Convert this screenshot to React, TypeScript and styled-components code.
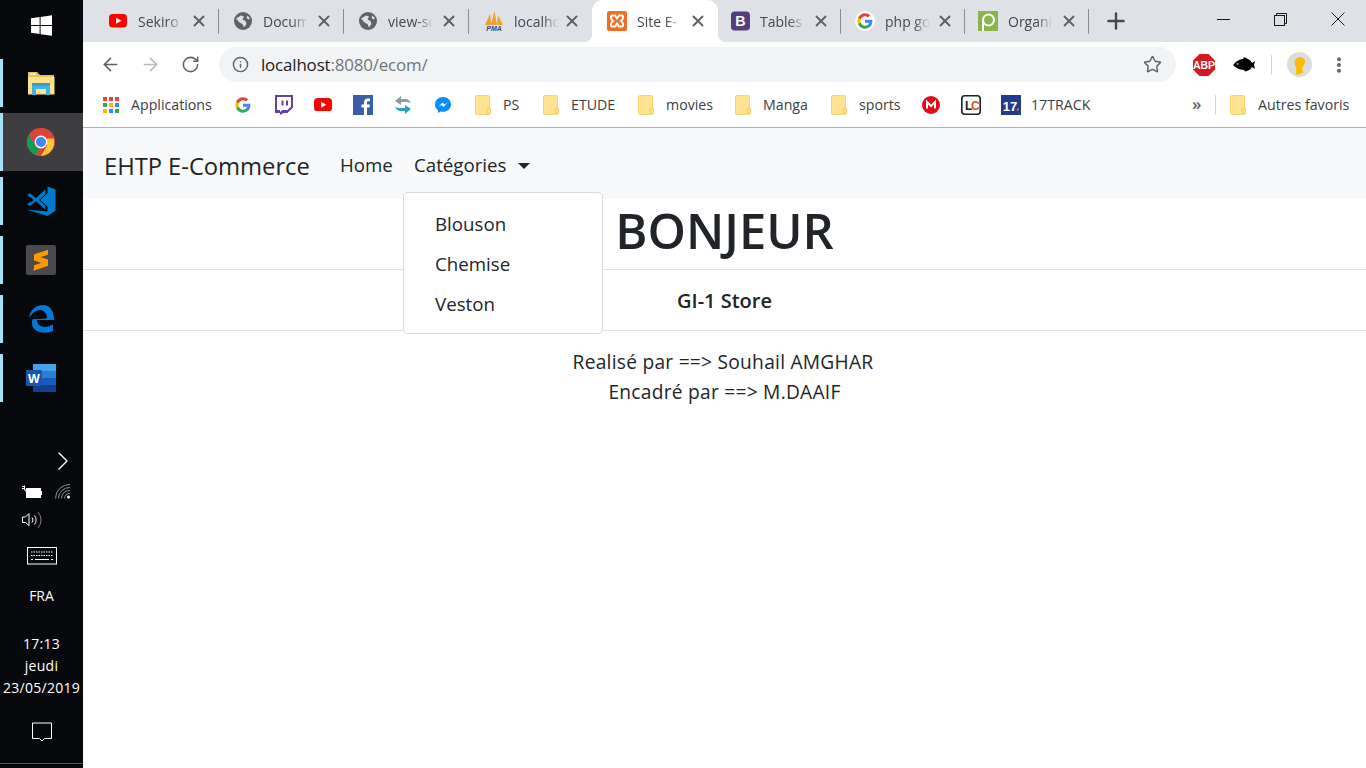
import React from "react";
import styled, { createGlobalStyle } from "styled-components";
import { ArrowLeft, ArrowRight, RotateCw, Info, Star, X, Plus, ChevronRight, MoreVertical } from "lucide-react";

const Global = createGlobalStyle`
  html, body { margin: 0; padding: 0; background: #fff; }
  body { font-family: "Open Sans", "Noto Sans", sans-serif; color: #212529; }
  * { box-sizing: border-box; }
`;
const Screen = styled.div`display: flex; width: 1366px; height: 768px; overflow: hidden; background: #fff;`;
const Taskbar = styled.aside`
  width: 83px; flex: none; background: #07080c; color: #fff; display: flex; flex-direction: column;
  position: relative;
`;
const StartButton = styled.div`height: 53px; display: flex; align-items: center; justify-content: center; padding: 0 1px 3px 0;`;
const Pinned = styled.div`display: flex; flex-direction: column;`;
const TaskItem = styled.div<{ $active?: boolean }>`
  position: relative; height: 59px; display: flex; align-items: center; justify-content: center; padding-right: 1px;
  border-top: 1px solid transparent; background-clip: padding-box;
  background-color: ${p => (p.$active ? "#3e3e41" : "transparent")};
  &::before {
    content: ""; position: absolute; left: 0; width: 3px; background: #a6dff8;
    top: ${p => (p.$active ? "0" : "5px")}; bottom: ${p => (p.$active ? "0" : "5px")};
  }
`;
const Tray = styled.div`margin-top: auto; display: flex; flex-direction: column; align-items: center; border-bottom: 1px solid #55565a; height: 318px; margin-bottom: 4px;`;
const TrayRow = styled.div<{ $h: number; $l?: number; $r?: number; $t?: number; $gap?: number }>`
  height: ${p => p.$h}px; width: 100%; display: flex; align-items: center; justify-content: center; gap: ${p => p.$gap ?? 0}px;
  padding: ${p => p.$t ?? 0}px ${p => p.$r ?? 0}px 0 ${p => p.$l ?? 0}px;
`;
const Clock = styled.div`display: flex; flex-direction: column; align-items: center; font-size: 14px; line-height: 22px; letter-spacing: .25px; padding-top: 19px; color: #fff; white-space: nowrap;`;
const Lang = styled.div`font-size: 14px; line-height: 20px; letter-spacing: 0;`;

const Browser = styled.main`flex: 1; min-width: 0; display: flex; flex-direction: column; position: relative;`;
const TabStrip = styled.div`height: 42px; flex: none; background: #dee1e6; display: flex; padding-left: 11px; align-items: stretch;`;
const Tab = styled.div<{ $active?: boolean; $sep?: boolean; $w: number; $pad: number }>`
  width: ${p => p.$w}px; flex: none; position: relative; display: flex; align-items: center; padding-left: ${p => p.$pad}px; gap: 10px;
  background: ${p => (p.$active ? "#fff" : "transparent")};
  border-radius: ${p => (p.$active ? "11px 11px 0 0" : "0")};
  color: #45484d;
  &::after {
    content: ""; display: ${p => (p.$sep ? "block" : "none")}; position: absolute; right: 0; top: 9px; width: 1px; height: 25px; background: #8b8e93;
  }
`;
const Flare = styled.span<{ $side: "left" | "right" }>`
  position: absolute; bottom: 0; width: 7px; height: 7px;
  ${p => (p.$side === "left" ? "left: -7px;" : "right: -7px;")}
  background: radial-gradient(circle at ${p => (p.$side === "left" ? "0 0" : "100% 0")}, transparent 6.6px, #fff 7px);
`;
const TabIconBox = styled.span<{ $w: number }>`width: ${p => p.$w}px; height: 20px; flex: none; display: flex; align-items: center; justify-content: flex-start;`;
const TabTitle = styled.span`
  width: 50px; flex: none; white-space: nowrap; font-size: 14px; letter-spacing: 0;
  -webkit-mask-image: linear-gradient(90deg, #000 58%, transparent 90%);
  mask-image: linear-gradient(90deg, #000 58%, transparent 90%);
`;
const TabClose = styled.span`position: absolute; right: 11px; top: 12px; display: flex; color: #5f6368;`;
const NewTab = styled.div`width: 54px; display: flex; align-items: center; justify-content: center; color: #45484d;`;
const WinControls = styled.div`margin-left: auto; display: flex; height: 38px; align-items: center; color: #1a1a1a;`;
const WinBtn = styled.div`width: 57px; display: flex; align-items: center; justify-content: center;`;

const Toolbar = styled.div`height: 43px; flex: none; background: #fff; display: flex; align-items: center; padding: 2px 0 0 16px;`;
const NavBtn = styled.div<{ $dim?: boolean; $l?: number }>`width: 40px; height: 24px; flex: none; display: flex; align-items: center; padding-left: ${p => p.$l ?? 1}px; color: ${p => (p.$dim ? "#b8babd" : "#5f6368")};`;
const Omnibox = styled.div`
  width: 957px; height: 35px; flex: none; background: #f1f3f4; border-radius: 18px; display: flex; align-items: center;
  padding: 0 14px 0 13px; color: #5f6368;
`;
const Url = styled.div`font-size: 16.9px; margin-left: 12px; color: #202124; letter-spacing: -0.15px; flex: 1;`;
const UrlRest = styled.span`color: #70757a;`;
const ExtArea = styled.div`display: flex; align-items: center; padding-left: 17px; gap: 0;`;
const ExtSlot = styled.div<{ $w: number; $l?: number }>`width: ${p => p.$w}px; padding-left: ${p => p.$l ?? 0}px; display: flex; align-items: center; flex: none;`;
const VSep = styled.div`width: 1px; height: 20px; background: #d5d6d8; flex: none;`;

const Bookmarks = styled.div`height: 43px; flex: none; background: #fff; border-bottom: 1px solid #b2b3b4; display: flex; align-items: center; padding: 0 0 3px 20px; position: relative;`;
const Bm = styled.div<{ $w: number; $gap?: number; $l?: number }>`width: ${p => p.$w}px; margin-left: ${p => p.$l ?? 0}px; flex: none; display: flex; align-items: center; gap: ${p => p.$gap ?? 12}px; white-space: nowrap; font-size: 14.2px; letter-spacing: 0; color: #3c4043;`;
const Overflow = styled.div`margin-left: 71px; width: 23px; font-size: 17px; font-weight: 600; color: #5f6368; padding-bottom: 3px;`;

const Navbar = styled.nav`height: 71px; flex: none; background: #f8f9fa; display: flex; align-items: center; padding: 4px 0 0 21px; position: relative;`;
const Brand = styled.div`font-size: 23.8px; color: #212529; width: 236px; letter-spacing: -0.05px; padding-top: 1px;`;
const NavLink = styled.div<{ $w?: number }>`font-size: 18.7px; width: ${p => (p.$w ? `${p.$w}px` : "auto")}; color: #212529; padding-bottom: 3px;`;
const Caret = styled.span`display: inline-block; width: 0; height: 0; margin-left: 12px; vertical-align: 3px; border-top: 6.5px solid #212529; border-left: 6.5px solid transparent; border-right: 6.5px solid transparent;`;
const Dropdown = styled.div`
  position: absolute; left: 320px; top: 64px; width: 200px; height: 142px; padding: 11px 0; background: #fff; z-index: 3;
  border: 1px solid rgba(0,0,0,.15); border-radius: 5px;
`;
const DropItem = styled.div`height: 40px; padding-left: 31px; font-size: 18.7px; line-height: 39px; color: #212529;`;

const Content = styled.section`text-align: center; position: relative;`;
const Heading = styled.h1`margin: 0; height: 71px; font-size: 48.9px; line-height: 62px; font-weight: 600; color: #212529; border-bottom: 1px solid #dee2e6;`;
const Sub = styled.h5`margin: 0; height: 61px; font-size: 20px; line-height: 61px; font-weight: 600; color: #212529; border-bottom: 1px solid #dee2e6;`;
const Credits = styled.div`padding-top: 16px; font-size: 19.2px; letter-spacing: .25px; line-height: 30px; color: #212529;`;
const CreditLine = styled.div<{ $r?: number }>`padding-right: ${p => p.$r ?? 0}px;`;

const Win = () => (
  <svg width="21" height="21" viewBox="0 0 21 21"><path fill="#fff" d="M0 3.200 8.600 2v7.900H0zM9.600 1.900 21 .2v9.700H9.600zM0 11h8.600v8L0 17.800zM9.600 11H21v9.800L9.600 19.200z" /></svg>
);
const Explorer = () => (
  <svg width="28" height="24" viewBox="0 0 28 24">
    <path fill="#e9c25a" d="M1 1h9l3 3h14v3H1z" /><path fill="#ffe28c" d="M1 6h26.500v17.500H1z" />
    <path fill="#fff" d="M3 2.500h6v1.500H3z" opacity=".8" /><path fill="#41b6e6" d="M5 14h18v10h-4v-6h-10v6H5z" /><path fill="#2a8fc4" d="M5 12h18v2.500H5z" opacity=".9" />
  </svg>
);
const Chrome = ({ s = 28 }: { s?: number }) => (
  <svg width={s} height={s} viewBox="0 0 48 48">
    <circle cx="24" cy="24" r="24" fill="#db4437" />
    <path fill="#0f9d58" d="M24 48A24 24 0 0 1 3.200 12L13.600 30l8 4-6 13z" />
    <path fill="#fcc934" d="M24 48l10.400-18 0-12H45.800A24 24 0 0 1 24 48z" />
    <path fill="#db4437" d="M3.200 12A24 24 0 0 1 45.800 14H24a10 10 0 0 0-10 10z" />
    <circle cx="24" cy="24" r="11" fill="#fff" /><circle cx="24" cy="24" r="8.700" fill="#4285f4" />
  </svg>
);
const VSCode = () => (
  <svg width="30" height="30" viewBox="0 0 30 30">
    <path fill="#007acc" d="M21.500.6 29.500 3.400v21.400L21.500 30 0 23.600l21.500 1.800zM21.500 7v13.800l-7.300-6.900z" />
    <path fill="#007acc" d="M1.200 8.800 4 7.200l6 5 9.500-9-.1 4.700-6.200 6 6.200 5.800v4l-9.400-8.800-6 5-2.800-1.500 5-5z" />
    <path fill="#07080c" d="M4.500 11l3 3-3 2.900z" />
  </svg>
);
const Sublime = () => (
  <svg width="30" height="30" viewBox="0 0 30 30">
    <rect width="30" height="30" rx="2" fill="#4a4a4b" />
    <path fill="#ff9800" d="M22 5 8 9.600v6L20 19.400 7 24.400v1.200l15-5v-6L10.400 10.800 22 7z" /><path fill="#ff9800" d="M8 9.600 22 5v4.700L8 14.300zM8 20.300 22 15.700v5l-14 4.700z" />
  </svg>
);
const Edge = () => (
  <svg width="26" height="28" viewBox="0 0 26 28">
    <path fill="#0078d7" d="M1 13C2 5 8 0 15 0c7 0 11 6 11 15H9c0 7 9 9 16 4.500v6.500C16 30 3 27 4 17 4 14 7 10 11 9c-3 1-5 2-6 5 2 0 14 0 14-1 0-4-3-8-7-8-5 0-8 4-11 8z" />
  </svg>
);
const Word = () => (
  <svg width="30" height="28" viewBox="0 0 30 28">
    <rect x="7" y="0" width="23" height="7" fill="#41a5ee" /><rect x="7" y="7" width="23" height="7" fill="#2b7cd3" /><rect x="7" y="14" width="23" height="7" fill="#185abd" /><rect x="7" y="21" width="23" height="7" fill="#103f91" />
    <rect x="0" y="6" width="16" height="16" rx="1" fill="#1a56b0" />
    <text x="8" y="19" textAnchor="middle" fontFamily="Liberation Sans" fontWeight="700" fontSize="12.500" fill="#fff">W</text>
  </svg>
);
const Battery = () => (
  <svg width="20" height="13" viewBox="0 0 20 13" fill="none" stroke="#fff"><path d="M0 1.500h2.500M0 3.500h2.500M2.500 .5v4.500h1.500V7" strokeWidth="1" /><rect x="4.500" y="3.500" width="14" height="9" fill="#fff" strokeWidth="1" /><path d="M19.500 6v4" strokeWidth="1" /></svg>
);
const Wifi = () => (
  <svg width="16" height="15" viewBox="0 0 16 15" fill="none" stroke="#8d8d90"><path d="M.500 14.500A14 14 0 0 1 15 .5M3.500 14.500A11 11 0 0 1 15 3.500M6.500 14.500A8 8 0 0 1 15 6.500M9.500 14.500A5 5 0 0 1 15 9.500" /><circle cx="13.500" cy="13" r="1.500" fill="#fff" stroke="none" /></svg>
);
const Speaker = () => (
  <svg width="21" height="18" viewBox="0 0 21 18" fill="none" stroke="#fff"><path d="M.500 6h3l3.500-3.500v12L3.500 11.500h-3z" /><path d="M10 6.500a4 4 0 0 1 0 5M12.500 4.500a7 7 0 0 1 0 9" /><path stroke="#808084" d="M16 1a12 12 0 0 1 0 16" /></svg>
);
const Keyboard = () => (
  <svg width="30" height="18" viewBox="0 0 30 18" fill="none" stroke="#fff"><rect x=".500" y=".500" width="29" height="16.500" />
    <path strokeDasharray="1.500 1" d="M4 5h22M4 8.500h22" /><path d="M4 12.500h2M8 12.500h14M24 12.500h2" /></svg>
);
const Notif = () => (
  <svg width="20" height="20" viewBox="0 0 20 20" fill="none" stroke="#fff"><path d="M.500 1h19v15.500h-7L10 19l-2.500-2.500h-7z" /></svg>
);

const YouTube = ({ w = 18 }: { w?: number }) => (
  <svg width={w} height={w * 0.75} viewBox="0 0 24 18"><rect width="24" height="18" rx="5" fill="#f00" /><path d="M9.500 5v8l7-4z" fill="#fff" /></svg>
);
const Globe = () => (
  <svg width="18" height="18" viewBox="0 0 18 18"><circle cx="9" cy="9" r="9" fill="#5f6368" /><path fill="#dee1e6" d="M2 6.500 7 3.500l3 1-1.500 3 3 1.500 1 3-2.500 3.500-1.500-3.500-3-1.500zM13.500 3.500l2.500 3-1.500 1-2-1.500z" /></svg>
);
const Pma = () => (
  <svg width="20" height="20" viewBox="0 0 20 20">
    <path fill="#f0a030" d="M1 14 6 3l1.500 11zM7 14 10.500 0 13 14zM13 14l1-10 5 10z" />
    <text x="10" y="20" textAnchor="middle" fontFamily="Liberation Sans" fontStyle="italic" fontWeight="700" fontSize="7" fill="#2f4a8c">PMA</text>
  </svg>
);
const Xampp = () => (
  <svg width="20" height="20" viewBox="0 0 20 20"><rect width="20" height="20" rx="2" fill="#ee6f23" />
    <path fill="none" stroke="#fff" strokeWidth="2" d="M5 4.500h3l2 3 2-3h3c1.500 0 1.500 4-1 5.500 2.500 1.500 2.500 5.500 1 5.500h-3l-2-3-2 3H5c-1.500 0-1.500-4 1-5.500-2.500-1.500-2.500-5.500-1-5.500z" />
  </svg>
);
const Boot = () => (
  <svg width="20" height="20" viewBox="0 0 20 20"><rect width="20" height="20" rx="4" fill="#563d7c" /><text x="10" y="15.500" textAnchor="middle" fontFamily="Liberation Sans" fontWeight="700" fontSize="15" fill="#fff">B</text></svg>
);
const GLogo = ({ s = 16 }: { s?: number }) => (
  <svg width={s} height={s} viewBox="0 0 48 48">
    <path fill="#4285f4" d="M46 24.500c0-1.600-.100-3.100-.400-4.500H24v9h12.400c-.500 2.800-2.200 5.300-4.600 6.900v5.700h7.400C43.500 37.700 46 31.700 46 24.500z" />
    <path fill="#34a853" d="M24 47c6.200 0 11.400-2 15.200-5.500l-7.400-5.700c-2 1.400-4.700 2.200-7.800 2.200-6 0-11-4-12.800-9.500H3.500v5.900C7.300 41.900 15 47 24 47z" />
    <path fill="#fbbc05" d="M11.200 28.500c-.500-1.400-.700-2.900-.700-4.500s.300-3.100.700-4.500v-5.900H3.500C2 16.700 1 20.200 1 24s1 7.300 2.500 10.400z" />
    <path fill="#ea4335" d="M24 10c3.400 0 6.400 1.200 8.800 3.400l6.600-6.600C35.400 3.100 30.200 1 24 1 15 1 7.300 6.100 3.500 13.600l7.700 5.900C13 14 18 10 24 10z" />
  </svg>
);
const GCircle = styled.span`display: flex; width: 20px; height: 20px; border-radius: 50%; background: #fff; align-items: center; justify-content: center;`;
const Patreon = () => (
  <svg width="20" height="20" viewBox="0 0 20 20"><rect width="20" height="20" fill="#8bb54a" /><path fill="none" stroke="#fff" strokeWidth="2" d="M5 20V9" /><circle cx="10.500" cy="9" r="5.500" fill="none" stroke="#fff" strokeWidth="2" /></svg>
);
const Apps = () => (
  <svg width="16" height="16" viewBox="0 0 16 16">
    {[["#ea4335", "#ea4335", "#ea4335"], ["#34a853", "#fbbc05", "#4285f4"], ["#fbbc05", "#4285f4", "#34a853"]].map((r, y) =>
      r.map((c, x) => <rect key={`${x}${y}`} x={x * 6} y={y * 6} width="4" height="4" fill={c} />)
    )}
  </svg>
);
const Twitch = () => (
  <svg width="20" height="20" viewBox="0 0 20 20"><path fill="#6441a4" d="M2 0h18v12.500L14.500 18h-4L7 20v-2H2V0z" /><path fill="#fff" d="M4 2h14v9.500L14.500 15h-5L7 17v-2H4z" /><path fill="#6441a4" d="M8.500 5.500h2v5h-2zM13 5.500h2v5h-2z" /></svg>
);
const Facebook = () => (
  <svg width="20" height="20" viewBox="0 0 20 20"><rect width="20" height="20" fill="#3b5ea8" /><path fill="#fff" d="M14 20v-7.500h2.500l.4-3H14V7.700c0-.9.300-1.400 1.500-1.400H17V3.600C16.500 3.500 15.700 3.500 14.800 3.500c-2.300 0-3.800 1.400-3.800 3.900v2.100H8.500v3H11V20z" /></svg>
);
const SyncIcon = () => (
  <svg width="18" height="20" viewBox="0 0 18 20">
    <path fill="#8d9aa3" d="M1 6 7 1v3h4c3 0 5 2 6 4-2-1-4-1-6-1H7v3z" />
    <path fill="#2aa3b8" d="M17 14l-6 5v-3H7c-3 0-5-2-6-4 2 1 4 1 6 1h4v-3z" />
  </svg>
);
const Messenger = () => (
  <svg width="16" height="16" viewBox="0 0 16 16"><path fill="#0a8dfb" d="M8 0C3.600 0 0 3.300 0 7.500c0 2.300 1.100 4.300 2.900 5.700V16l2.700-1.500c.8.200 1.600.3 2.400.3 4.400 0 8-3.200 8-7.300S12.400 0 8 0z" /><path fill="#fff" d="M3.300 9.900 7.500 5.500l2 2.100 3.200-2.100-4.200 4.500-2-2.100z" /></svg>
);
const Folder = () => (
  <svg width="16" height="20" viewBox="0 0 16 20"><path fill="#ffe38f" stroke="#f4d675" d="M1.500.500h12a1 1 0 0 1 1 1v17a1 1 0 0 1-1 1h-12a1 1 0 0 1-1-1v-17a1 1 0 0 1 1-1z" /><rect x="12" y="13" width="3.500" height="6" rx="1" fill="#fbe08a" stroke="#edc85e" strokeWidth=".800" /></svg>
);
const Mega = () => (
  <svg width="18" height="18" viewBox="0 0 18 18"><circle cx="9" cy="9" r="9" fill="#e30613" /><path fill="none" stroke="#fff" strokeWidth="2" d="M5 12.500V6l4 4 4-4v6.500" /></svg>
);
const LC = () => (
  <svg width="20" height="20" viewBox="0 0 20 20"><rect x=".800" y=".800" width="18.400" height="18.400" rx="3" fill="#fff" stroke="#222" strokeWidth="1.600" /><text x="4" y="15" fontFamily="Liberation Sans" fontWeight="700" fontSize="12" fill="#222">L</text><text x="10" y="15" fontFamily="Liberation Sans" fontWeight="700" fontSize="12" fill="#d9541e">C</text></svg>
);
const Track = () => (
  <svg width="20" height="20" viewBox="0 0 20 20"><rect width="20" height="20" fill="#233a8f" /><text x="9" y="15.500" textAnchor="middle" fontFamily="Liberation Sans" fontWeight="700" fontSize="13" fill="#fff">17</text><path d="M15.500 15.500l2-3v3z" fill="#f5b324" /></svg>
);
const Abp = () => (
  <svg width="22" height="22" viewBox="0 0 22 22"><path fill="#d8171e" d="M6.500 0h9L22 6.500v9L15.500 22h-9L0 15.500v-9z" /><text x="11" y="15" textAnchor="middle" fontFamily="Liberation Sans" fontWeight="700" fontSize="10.500" fill="#fff">ABP</text></svg>
);
const Fish = () => (
  <svg width="22" height="16" viewBox="0 0 22 16"><path d="M0 8c3-3.500 6-6 10-6l1-2 4 2c2.500 1 3.500 3 4 4l3-2-1 4 1 4-3-2c-1 2-3 4-7 4.500l-1-1.500C6 12.500 3 11 0 8z" fill="#000" /><circle cx="4.500" cy="7" r=".8" fill="#fff" /></svg>
);
const Avatar = () => (
  <svg width="25" height="25" viewBox="0 0 25 25"><circle cx="12.500" cy="12.500" r="12.500" fill="#dcdcdc" /><path fill="#fbbc04" d="M13 5c3.500 0 5.500 2.500 5 5.500-.4 2.500-2.500 4-3 5.500 0 1.500.5 2.500 1.500 4.500a12.500 12.500 0 0 1-8 2c.5-3 1-5 .5-7-1-2-1.500-3.500-1.500-5C7.500 7.500 10 5 13 5z" /></svg>
);
const Restore = () => (
  <svg width="13" height="13" viewBox="0 0 13 13" fill="none" stroke="#1a1a1a"><rect x=".500" y="2.500" width="10" height="10" /><path d="M2.500 2.500V.500h10v10h-2" /></svg>
);
const Minimize = () => (<svg width="13" height="1" viewBox="0 0 13 1"><rect width="13" height="1" fill="#1a1a1a" /></svg>);
const CloseWin = () => (<svg width="14" height="14" viewBox="0 0 14 14" stroke="#1a1a1a"><path d="M.500.500l13 13M13.500.500l-13 13" /></svg>);

const tabs = [
  { t: "Sekiro", i: <YouTube />, sep: true, w: 125, pad: 15, box: 19 },
  { t: "Docum", i: <Globe />, sep: true, w: 125, pad: 15, box: 19 },
  { t: "view-so", i: <Globe />, sep: true, w: 125, pad: 15, box: 19 },
  { t: "localho", i: <Pma />, w: 123, pad: 15, box: 20 },
  { t: "Site E-", i: <Xampp />, active: true, w: 126, pad: 15, box: 20 },
  { t: "Tables", i: <Boot />, sep: true, w: 123, pad: 13, box: 19 },
  { t: "php go", i: <GCircle><GLogo s={16} /></GCircle>, sep: true, w: 124, pad: 14, box: 20 },
  { t: "Organi", i: <Patreon />, sep: true, w: 124, pad: 13, box: 20 },
];
const bookmarks: { w: number; i: React.ReactNode; t?: string; gap?: number }[] = [
  { w: 132, i: <Apps />, t: "Applications" },
  { w: 38, i: <GLogo /> },
  { w: 41, i: <Twitch /> },
  { w: 39, i: <YouTube /> },
  { w: 41, i: <Facebook /> },
  { w: 41, i: <SyncIcon /> },
  { w: 40, i: <Messenger /> },
  { w: 68, i: <Folder />, t: "PS" },
  { w: 95, i: <Folder />, t: "ETUDE" },
  { w: 97, i: <Folder />, t: "movies" },
  { w: 96, i: <Folder />, t: "Manga" },
  { w: 91, i: <Folder />, t: "sports" },
  { w: 39, i: <Mega /> },
  { w: 40, i: <LC /> },
  { w: 120, i: <Track />, t: "17TRACK", gap: 10 },
];

export default function App() {
  return (
    <Screen>
      <Global />
      <Taskbar>
        <StartButton><Win /></StartButton>
        <Pinned>
          <TaskItem><Explorer /></TaskItem>
          <TaskItem $active><Chrome /></TaskItem>
          <TaskItem><VSCode /></TaskItem>
          <TaskItem><Sublime /></TaskItem>
          <TaskItem><Edge /></TaskItem>
          <TaskItem><Word /></TaskItem>
        </Pinned>
        <Tray>
          <TrayRow $h={30} $l={42}><ChevronRight size={32} strokeWidth={1} color="#fff" /></TrayRow>
          <TrayRow $h={30} $l={10} $gap={13}><Battery /><Wifi /></TrayRow>
          <TrayRow $h={28} $r={18}><Speaker /></TrayRow>
          <TrayRow $h={44}><Keyboard /></TrayRow>
          <TrayRow $h={36}><Lang>FRA</Lang></TrayRow>
          <Clock><span>17:13</span><span>jeudi</span><span>23/05/2019</span></Clock>
          <TrayRow $h={64} $t={2}><Notif /></TrayRow>
        </Tray>
      </Taskbar>
      <Browser>
        <TabStrip>
          {tabs.map(tab => (
            <Tab key={tab.t} $active={tab.active} $sep={tab.sep} $w={tab.w} $pad={tab.pad}>
              {tab.active && <Flare $side="left" />}
              {tab.active && <Flare $side="right" />}
              <TabIconBox $w={tab.box}>{tab.i}</TabIconBox>
              <TabTitle>{tab.t}</TabTitle>
              <TabClose><X size={18} strokeWidth={2.5} /></TabClose>
            </Tab>
          ))}
          <NewTab><Plus size={26} strokeWidth={2.2} /></NewTab>
          <WinControls>
            <WinBtn><Minimize /></WinBtn>
            <WinBtn><Restore /></WinBtn>
            <WinBtn><CloseWin /></WinBtn>
          </WinControls>
        </TabStrip>
        <Toolbar>
          <NavBtn><ArrowLeft size={21} strokeWidth={1.9} /></NavBtn>
          <NavBtn $dim><ArrowRight size={21} strokeWidth={1.9} /></NavBtn>
          <NavBtn $l={2}><RotateCw size={19} strokeWidth={1.9} /></NavBtn>
          <Omnibox>
            <Info size={17} strokeWidth={2} />
            <Url>localhost<UrlRest>:8080/ecom/</UrlRest></Url>
            <Star size={19} strokeWidth={1.8} />
          </Omnibox>
          <ExtArea>
            <ExtSlot $w={40}><Abp /></ExtSlot>
            <ExtSlot $w={38}><Fish /></ExtSlot>
            <VSep />
            <ExtSlot $w={57} $l={15}><Avatar /></ExtSlot>
            <ExtSlot $w={20}><MoreVertical size={20} strokeWidth={2.8} color="#5f6368" /></ExtSlot>
          </ExtArea>
        </Toolbar>
        <Bookmarks>
          {bookmarks.map((b, i) => (
            <Bm key={i} $w={b.w} $gap={b.gap}>{b.i}{b.t && <span>{b.t}</span>}</Bm>
          ))}
          <Overflow>»</Overflow>
          <VSep />
          <Bm $w={120} $l={14}><Folder /><span>Autres favoris</span></Bm>
        </Bookmarks>
        <Navbar>
          <Brand>EHTP E-Commerce</Brand>
          <NavLink $w={74}>Home</NavLink>
          <NavLink>Catégories<Caret /></NavLink>
          <Dropdown>
            <DropItem>Blouson</DropItem>
            <DropItem>Chemise</DropItem>
            <DropItem>Veston</DropItem>
          </Dropdown>
        </Navbar>
        <Content>
          <Heading>BONJEUR</Heading>
          <Sub>GI-1 Store</Sub>
          <Credits>
            <CreditLine $r={3}>Realisé par ==&gt; Souhail AMGHAR</CreditLine>
            <CreditLine>Encadré par ==&gt; M.DAAIF</CreditLine>
          </Credits>
        </Content>
      </Browser>
    </Screen>
  );
}
